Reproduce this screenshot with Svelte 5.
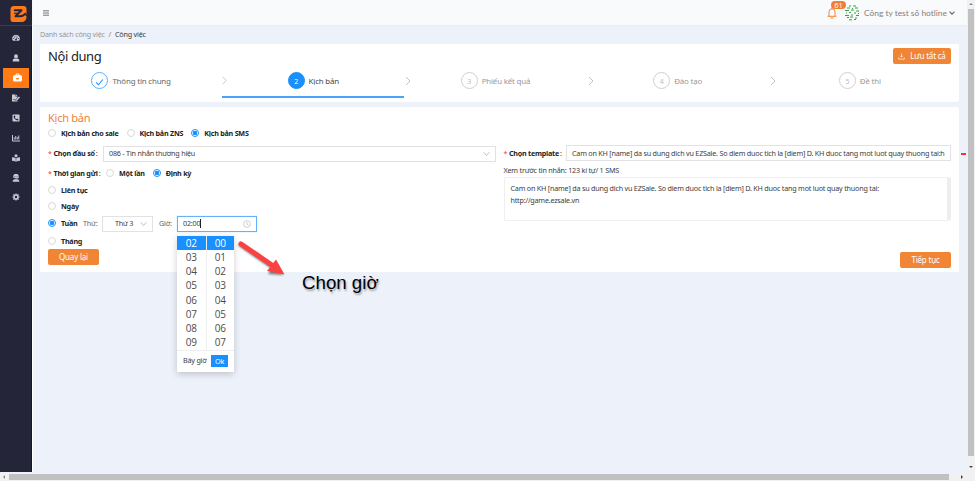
<script>
  const steps = [
    { n: '', title: 'Thông tin chung', state: 'done' },
    { n: '2', title: 'Kịch bản', state: 'active' },
    { n: '3', title: 'Phiếu kết quả', state: 'wait' },
    { n: '4', title: 'Đào tạo', state: 'wait' },
    { n: '5', title: 'Đề thi', state: 'wait' }
  ];
  const hours = ['02', '03', '04', '05', '06', '07', '08', '09'];
  const minutes = ['00', '01', '02', '03', '04', '05', '06', '07'];
  const menu = ['gauge', 'user', 'case', 'sign', 'phone', 'chart', 'reader', 'agent', 'gear'];
  const message = 'Cam on KH [name] da su dung dich vu EZSale. So diem duoc tich la [diem] D. KH duoc tang mot luot quay thuong tai:';
</script>

{#snippet radio(label, on)}
  <span class="radio"><i class:on></i><b>{label}</b></span>
{/snippet}

{#snippet glyph(name)}
  <svg class="glyph" viewBox="0 0 16 16">
    {#if name === 'gauge'}
      <path fill="currentColor" d="M8 1.5a7.5 7.5 0 0 0-6.6 11.2l.8.8h11.6l.8-.8A7.5 7.5 0 0 0 8 1.5z" />
      <g fill="#252539"><circle cx="3.5" cy="9.2" r="1" /><circle cx="4.8" cy="5.8" r="1" /><circle cx="8" cy="4" r="1" /><circle cx="12.5" cy="9.2" r="1" /><circle cx="8" cy="11.2" r="1.8" /></g>
      <path d="M8 11l3-5.5" stroke="#252539" stroke-width="1.2" />
    {:else if name === 'user'}
      <circle cx="8" cy="4.5" r="3.8" fill="currentColor" />
      <path fill="currentColor" d="M1.5 15v-2.5A3.5 3.5 0 0 1 5 9h6a3.5 3.5 0 0 1 3.5 3.5V15z" />
    {:else if name === 'case'}
      <path fill="currentColor" fill-rule="evenodd" d="M4.5 4V2.5L6 1h4l1.500 1.500V4H14.500L16 5.500V9H0V5.500L1.500 4zM6.200 4h3.600V2.700H6.200zM0 10h6v1.500h4V10h6v3.500L14.500 15h-13L0 13.500z" />
      <path fill="currentColor" d="M0 8h5.500v4H0zM10.500 8H16v4h-5.500z" />
    {:else if name === 'sign'}
      <path fill="currentColor" d="M0 1h7v4h4v2L7 11v2h4v2H0z" />
      <path fill="currentColor" d="M8 1l3 3H8zM8.500 10.500L14 5l2 2-5.500 5.500-2.500.5z" />
      <path d="M2 12l2-2 1 2h2" stroke="#252539" fill="none" />
    {:else if name === 'phone'}
      <rect x="1" y="1" width="14" height="14" rx="1.500" fill="currentColor" />
      <path fill="#252539" d="M3.200 4l2.500-.8 1.300 2.800-1.400 1.200a6 6 0 0 0 3.200 3.200L10 9l2.800 1.300-.8 2.500C7 13 3 9 3.200 4z" />
    {:else if name === 'chart'}
      <path d="M1 2v12h15M4.500 11V7M7.500 11V4M10.500 11V6M13.500 11V3" stroke="currentColor" stroke-width="2" fill="none" />
    {:else if name === 'reader'}
      <circle cx="8" cy="3.500" r="3" fill="currentColor" />
      <path fill="currentColor" d="M0 6.500c3 0 5.500.8 7.500 2.200V15.500C5.500 14.200 3 13.700 0 13.700zM16 6.500c-3 0-5.500.8-7.500 2.200V15.500c2-1.300 4.500-1.800 7.500-1.800z" />
    {:else if name === 'agent'}
      <path fill="currentColor" d="M2.500 7V5a5.500 5.500 0 0 1 11 0v2.500L12 9H8V7.500h3V4.500H5V8L4 8.500zM5.500 5h5v2.500L8 9.500 5.500 7.500zM1.500 15.500v-2L4 10.500h8l2.500 3v2z" />
    {:else}
      <circle cx="8" cy="8" r="3.900" fill="none" stroke="currentColor" stroke-width="3" />
      <path d="M8 .8v3M8 12.200v3M.8 8h3M12.200 8h3M2.900 2.900L5 5M11 11l2.100 2.100M13.100 2.900L11 5M5 11l-2.100 2.100" stroke="currentColor" stroke-width="2.400" />
    {/if}
  </svg>
{/snippet}

<div class="screen">
  <div class="upper">
    <aside>
      <div class="brand">
        <svg viewBox="0 0 18 18">
          <path fill="#fb7a1c" d="M5 1h9.500Q17.500 1 17.500 4v4.500q0 1.500-1.500 2.500h1.500Q17.500 17 12.500 17H4q-2.500 0-2.500-3V4.500Q1.500 1 5 1z" />
          <path d="M5.800 5.200H12.500L6.500 11.300H10.500Q14 11.300 16.500 8.800" fill="none" stroke="#252539" stroke-width="2" stroke-linejoin="round" stroke-linecap="round" />
          <path d="M5 8.300h5" stroke="#252539" stroke-width="1.100" />
        </svg>
      </div>
      <nav>
        {#each menu as m}
          <div class="item" class:current={m === 'case'}>{@render glyph(m)}</div>
        {/each}
      </nav>
    </aside>

    <div class="page">
      <header>
        <svg class="burger" viewBox="0 0 6 6"><path d="M0 .8h6M0 3h6M0 5.200h6" stroke="#666" stroke-width=".9" /></svg>
        <div class="account">
          <div class="bell">
            <svg viewBox="0 0 10 12"><path d="M1 9.300h8M2 9V4.800a3 3 0 0 1 6 0V9M4 11h2M5 .8v1" fill="none" stroke="#f08536" stroke-width="1" stroke-linecap="round" /></svg>
            <span class="badge">61</span>
          </div>
          <svg class="avatar" viewBox="0 0 16 16">
            <circle cx="8" cy="8" r="7.800" fill="#f5faf5" />
            <path d="M5 1h2M9 1h3M3 3h3M8 3.500h1M11 3h3M1 5.500h4M7 5h3M12 6h3M2 8h1M5 7.500h2M10 8h2M14 8.500h1M1 10.500h4M7 10h2M12 10.500h3M3 12.500h2M6 12h3M11 13h2M5 14.800h3M10 14.500h2" stroke="#3d9b50" stroke-width="1" />
          </svg>
          <span class="company">Công ty test số hotline</span>
          <svg class="caret" viewBox="0 0 6 4"><path d="M.5.600L3 3.200 5.500.600" fill="none" stroke="#666" stroke-width="1.100" /></svg>
        </div>
      </header>

      <div class="crumbs"><span class="c1">Danh sách công việc</span><span class="slash">/</span><span>Công việc</span></div>

      <section class="card top">
        <div class="headline">
          <h1>Nội dung</h1>
          <button class="btn save">
            <svg viewBox="0 0 8 8"><path d="M4 .5v4M2.500 3.200L4 4.700l1.500-1.500M.8 5v2h6.400V5" fill="none" stroke="#fff" stroke-width=".75" /></svg>
            <span>Lưu tất cả</span>
          </button>
        </div>
        <div class="steps">
          {#each steps as s, i}
            <div class="step {s.state}">
              <span class="dot">
                {#if s.state === 'done'}<svg viewBox="0 0 8 8"><path d="M1 4.800L3 6.900 7 2.200" fill="none" stroke="#1890ff" stroke-width=".9" /></svg>{:else}{s.n}{/if}
              </span>
              <span>{s.title}</span>
              {#if i < 4}<svg class="next" viewBox="0 0 6 10"><path d="M1 1l4 4-4 4" fill="none" stroke="#bbb" stroke-width=".9" /></svg>{/if}
            </div>
          {/each}
        </div>
      </section>

      <section class="card form">
        <div class="left">
          <h2>Kịch bản</h2>
          <div class="row r1">{@render radio('Kịch bản cho sale', false)}{@render radio('Kịch bản ZNS', false)}{@render radio('Kịch bản SMS', true)}</div>
          <div class="row r2">
            <span class="label"><em>*</em><b>Chọn đầu số</b><s>:</s></span>
            <div class="field select"><span>086 - Tin nhắn thương hiệu</span><svg class="down" viewBox="0 0 8 6"><path d="M.8 1L4 4.800 7.200 1" fill="none" stroke="#b0b0b0" stroke-width=".9" /></svg></div>
          </div>
          <div class="row r3"><span class="label"><em>*</em><b>Thời gian gửi</b><s>:</s></span>{@render radio('Một lần', false)}{@render radio('Định kỳ', true)}</div>
          <div class="row r4">{@render radio('Liên tục', false)}</div>
          <div class="row r5">{@render radio('Ngày', false)}</div>
          <div class="row r6">
            <div class="week">{@render radio('Tuần', true)}</div>
            <span class="hint day">Thứ:</span>
            <div class="field weekday"><span>Thứ 3</span><svg class="down" viewBox="0 0 8 6"><path d="M.8 1L4 4.800 7.200 1" fill="none" stroke="#b0b0b0" stroke-width=".9" /></svg></div>
            <span class="hint hour">Giờ:</span>
            <div class="field time">
              <span>02:00</span><i class="cursor"></i>
              <svg class="clock" viewBox="0 0 8 8"><circle cx="4" cy="4" r="3.400" fill="none" stroke="#bbb" stroke-width=".7" /><path d="M4 2v2.300l1.500.8" fill="none" stroke="#bbb" stroke-width=".7" /></svg>
              <div class="picker">
                <div class="cols">
                  {#each [hours, minutes] as list}
                    <ul>{#each list as v, i}<li class:sel={i === 0}>{v}</li>{/each}</ul>
                  {/each}
                </div>
                <div class="foot"><span>Bây giờ</span><span class="ok">Ok</span></div>
              </div>
            </div>
          </div>
          <div class="row r7">{@render radio('Tháng', false)}</div>
          <button class="btn back"><span>Quay lại</span></button>
        </div>

        <div class="right">
          <div class="row r2">
            <span class="label"><em>*</em><b>Chọn template</b><s>:</s></span>
            <div class="field template">{message}<span class="tail">h</span></div>
          </div>
          <div class="preview">Xem trước tin nhắn: 123 kí tự/ 1 SMS</div>
          <div class="area"><div>{message}</div><div>http://game.ezsale.vn</div></div>
          <button class="btn go"><span>Tiếp tục</span></button>
        </div>
      </section>
    </div>

    <div class="vbar"><i class="up"></i><div class="vthumb"></div><i class="dn"></i></div>
  </div>
  <div class="hbar"><i class="lt"></i><div class="hthumb"></div><i class="rt"></i></div>

  <svg class="note" viewBox="0 0 60 50">
    <g filter="url(#soft)"><path d="M6 9L42 34" stroke="#777" stroke-width="4.500" stroke-linecap="round" /><path d="M33 38l15 1-7-13z" fill="#777" /></g>
    <path d="M6 8L39 30.500" stroke="#fb4141" stroke-width="5" stroke-linecap="round" />
    <path d="M32 35L49.500 38.500 41 23.500z" fill="#fb4141" />
    <defs><filter id="soft"><feGaussianBlur stdDeviation="1.200" /></filter></defs>
  </svg>
  <div class="callout">Chọn giờ</div>
  <div class="dash"></div>
</div>

<style>
  :global(body) { margin: 0; overflow: hidden; }
  * { box-sizing: border-box; }
  svg { display: block; flex: none; }
  .screen { position: relative; width: 975px; height: 481px; overflow: hidden; display: flex; flex-direction: column; background: #edf1f9; font: 7.200px/1.500 "Noto Sans", "Open Sans", sans-serif; letter-spacing: -.212px; color: #3c3c3c; white-space: nowrap; }
  .upper { display: flex; height: 473px; }
  aside { width: 33px; height: 472px; background: #252539; border-right: 1px solid #fff; box-shadow: inset -1px 0 #15152b; flex: none; }
  .brand { height: 26px; padding: 5px 0 0 9px; border-bottom: 1px solid #3c3c50; }
  .brand svg { width: 18px; height: 18px; }
  nav { padding-top: 2px; }
  .item { height: 19.940px; display: flex; align-items: center; justify-content: center; color: #c9c9d2; }
  .item.current { width: 26px; margin-left: 3px; padding-left: 3px; background: #ff7b16; color: #fff; }
  .glyph { width: 8px; height: 8px; }
  .current .glyph { width: 9px; height: 9px; }
  .page { width: 934px; }
  header { height: 25px; background: #f9fafc; box-shadow: 0 0 2px #dfe2e8; display: flex; align-items: center; justify-content: space-between; padding: 1px 12px 0 10px; }
  .burger { width: 6px; height: 6px; }
  .account { display: flex; align-items: center; }
  .bell { position: relative; margin-right: 7px; }
  .bell svg { width: 10px; height: 12px; }
  .badge { position: absolute; left: 4px; top: -6px; width: 15px; height: 8px; border-radius: 4px; background: #ef8033; color: #fff; font: 7.500px/8px "Open Sans", sans-serif; letter-spacing: 0; text-align: center; }
  .avatar { width: 16px; height: 16px; margin-right: 4px; }
  .company { font: 8.400px/12px Lato, "Open Sans", sans-serif; letter-spacing: 0; color: #808080; width: 85px; }
  .caret { width: 6px; height: 4px; }
  .crumbs { height: 19px; padding: 3px 0 0 7px; display: flex; line-height: 12px; }
  .c1 { width: 68.500px; color: #999; }
  .slash { width: 6.500px; color: #888; }
  .card { margin-left: 7px; width: 919px; background: #fff; border-radius: 2px; }
  .top { height: 58px; }
  .headline { height: 25px; padding: 4px 8px 0; display: flex; justify-content: space-between; align-items: flex-start; }
  h1 { margin: 0; font: 400 13px/17px "Noto Sans", sans-serif; letter-spacing: -.4px; color: #222; }
  .btn { display: flex; align-items: center; justify-content: center; border: 0; padding: 0; border-radius: 2px; background: #f08536; color: #fff; font: 8px/10px "Noto Sans", sans-serif; letter-spacing: -.2px; height: 16px; width: 51px; }
  .save { width: 58px; gap: 5px; }
  .save svg { width: 7px; height: 7px; }
  .steps { display: flex; height: 29px; }
  .step { position: relative; width: 182.200px; display: flex; justify-content: center; gap: 4px; padding-top: 3px; color: #999; font-size: 7.900px; letter-spacing: -.17px; line-height: 18px; }
  .step.done { color: #666; }
  .step.active { color: #444; }
  .step.active::after { content: ""; position: absolute; left: 0; right: 0; bottom: 0; height: 2px; background: #4aa3fa; }
  .dot { width: 17px; height: 17px; border-radius: 50%; border: 1px solid #d0d0d0; display: flex; align-items: center; justify-content: center; color: #bbb; font-size: 7px; line-height: 17px; padding-top: 1px; }
  .done .dot { border-color: #5baeff; }
  .done svg { width: 9px; height: 9px; }
  .active .dot { background: #1890ff; border-color: #1890ff; color: #fff; }
  .next { position: absolute; width: 6px; height: 10px; right: -7px; top: 7px; }
  .form { margin-top: 5px; height: 165px; display: flex; padding: 0 8px; }
  .left { width: 455.500px; display: flex; flex-direction: column; flex: none; }
  .right { width: 447.500px; display: flex; flex-direction: column; padding-top: 38px; }
  h2 { margin: 0; height: 19px; font: 400 11px/22px "Noto Sans", sans-serif; letter-spacing: -.25px; color: #f08040; }
  .row { display: flex; align-items: center; flex: none; }
  .r1 { height: 15px; gap: 8px; }
  .left .r2 { height: 25px; }
  .right .r2 { height: 16px; }
  .r3 { height: 15px; }
  .r4 { height: 18px; }
  .r5 { height: 14px; }
  .r6 { height: 21px; }
  .r7 { height: 15px; }
  .radio { display: flex; align-items: center; gap: 5px; }
  .radio i { width: 8px; height: 8px; border: 1px solid #d9d9d9; border-radius: 50%; background: #fff; }
  .radio i.on { border-color: #1890ff; background: radial-gradient(#1890ff 0 2px, #fff 2.600px); }
  b { font-size: 7.200px; font-weight: 700; letter-spacing: -.24px; color: #222; }
  .label { display: flex; align-items: center; width: 55px; flex: none; }
  .label em { width: 5.500px; color: #f33; font-style: normal; }
  .label s { text-decoration: none; margin-left: 1px; }
  .r3 .label { width: 58px; }
  .r3 .radio + .radio { margin-left: 8px; }
  .right .label { width: 62.500px; }
  .field { height: 16px; border: 1px solid #e2e2e2; display: flex; align-items: center; background: #fff; position: relative; flex: none; }
  .select { width: 392.500px; padding: 0 5px; justify-content: space-between; }
  .down { width: 7px; height: 6px; }
  .week { width: 35px; }
  .hint { color: #666; }
  .day { width: 19px; }
  .weekday { width: 51px; padding: 0 5px 0 12px; justify-content: space-between; }
  .hour { padding-left: 6px; width: 24px; }
  .time { width: 80px; padding: 0 5px; border-color: #63b2fb; box-shadow: 0 0 1px #1890ff66; }
  .cursor { width: 1px; height: 9px; background: #222; }
  .clock { width: 8px; height: 8px; margin-left: auto; }
  .picker { position: absolute; z-index: 2; left: -1px; top: 19px; width: 57px; height: 136.500px; background: #fff; box-shadow: 0 2px 7px #0003; }
  .cols { display: flex; height: 115px; border-bottom: 1px solid #eee; }
  ul { list-style: none; margin: 0; padding: 0; width: 28.500px; }
  ul + ul { border-left: 1px solid #eee; }
  li { height: 14.250px; font: 10px/15px "Open Sans", sans-serif; letter-spacing: -.1px; text-align: center; color: #4c4c4c; }
  li.sel { background: #1890ff; color: #fff; }
  .foot { display: flex; align-items: center; justify-content: space-between; padding: 4px 6px 0; }
  .ok { width: 17px; height: 12px; line-height: 12px; background: #1890ff; color: #fff; text-align: center; }
  .template { width: 385px; padding-left: 5px; }
  .tail { width: 5px; }
  .preview { height: 15.500px; line-height: 19px; }
  .area { height: 44.500px; border: 1px solid #f0f0f0; border-right: 4px solid #eee; border-radius: 2px; padding: 5.500px 6px; line-height: 11.500px; flex: none; }
  .go { margin: 31px 0 0 auto; }
  .vbar { width: 8px; background: #f1f1f1; display: flex; flex-direction: column; align-items: center; padding: 3px 0; }
  .vthumb { width: 6px; height: 447px; margin: 4px 0 10px; background: #c1c1c1; }
  .hbar { height: 8px; background: #f1f1f1; display: flex; align-items: center; padding-left: 3px; }
  .hthumb { width: 940px; height: 6px; margin-left: 4px; background: #c1c1c1; }
  .up, .dn, .lt, .rt { border: 2px solid transparent; width: 0; height: 0; flex: none; }
  .up { border-top: 0; border-bottom-color: #888; }
  .dn { border-bottom: 0; border-top-color: #444; }
  .lt { border-left: 0; border-right-color: #888; }
  .rt { border-right: 0; border-left-color: #444; margin-left: 12px; }
  .note { position: absolute; left: 235px; top: 236px; width: 60px; height: 50px; z-index: 3; }
  .callout { position: absolute; left: 302px; top: 271px; font: 18.700px/24px "Liberation Sans", Arial, sans-serif; letter-spacing: 0; color: #000; text-shadow: 1px 2px 2px #0005; }
  .dash { position: absolute; left: 961px; top: 153px; width: 5px; height: 2px; background: #f3323a; }
</style>
